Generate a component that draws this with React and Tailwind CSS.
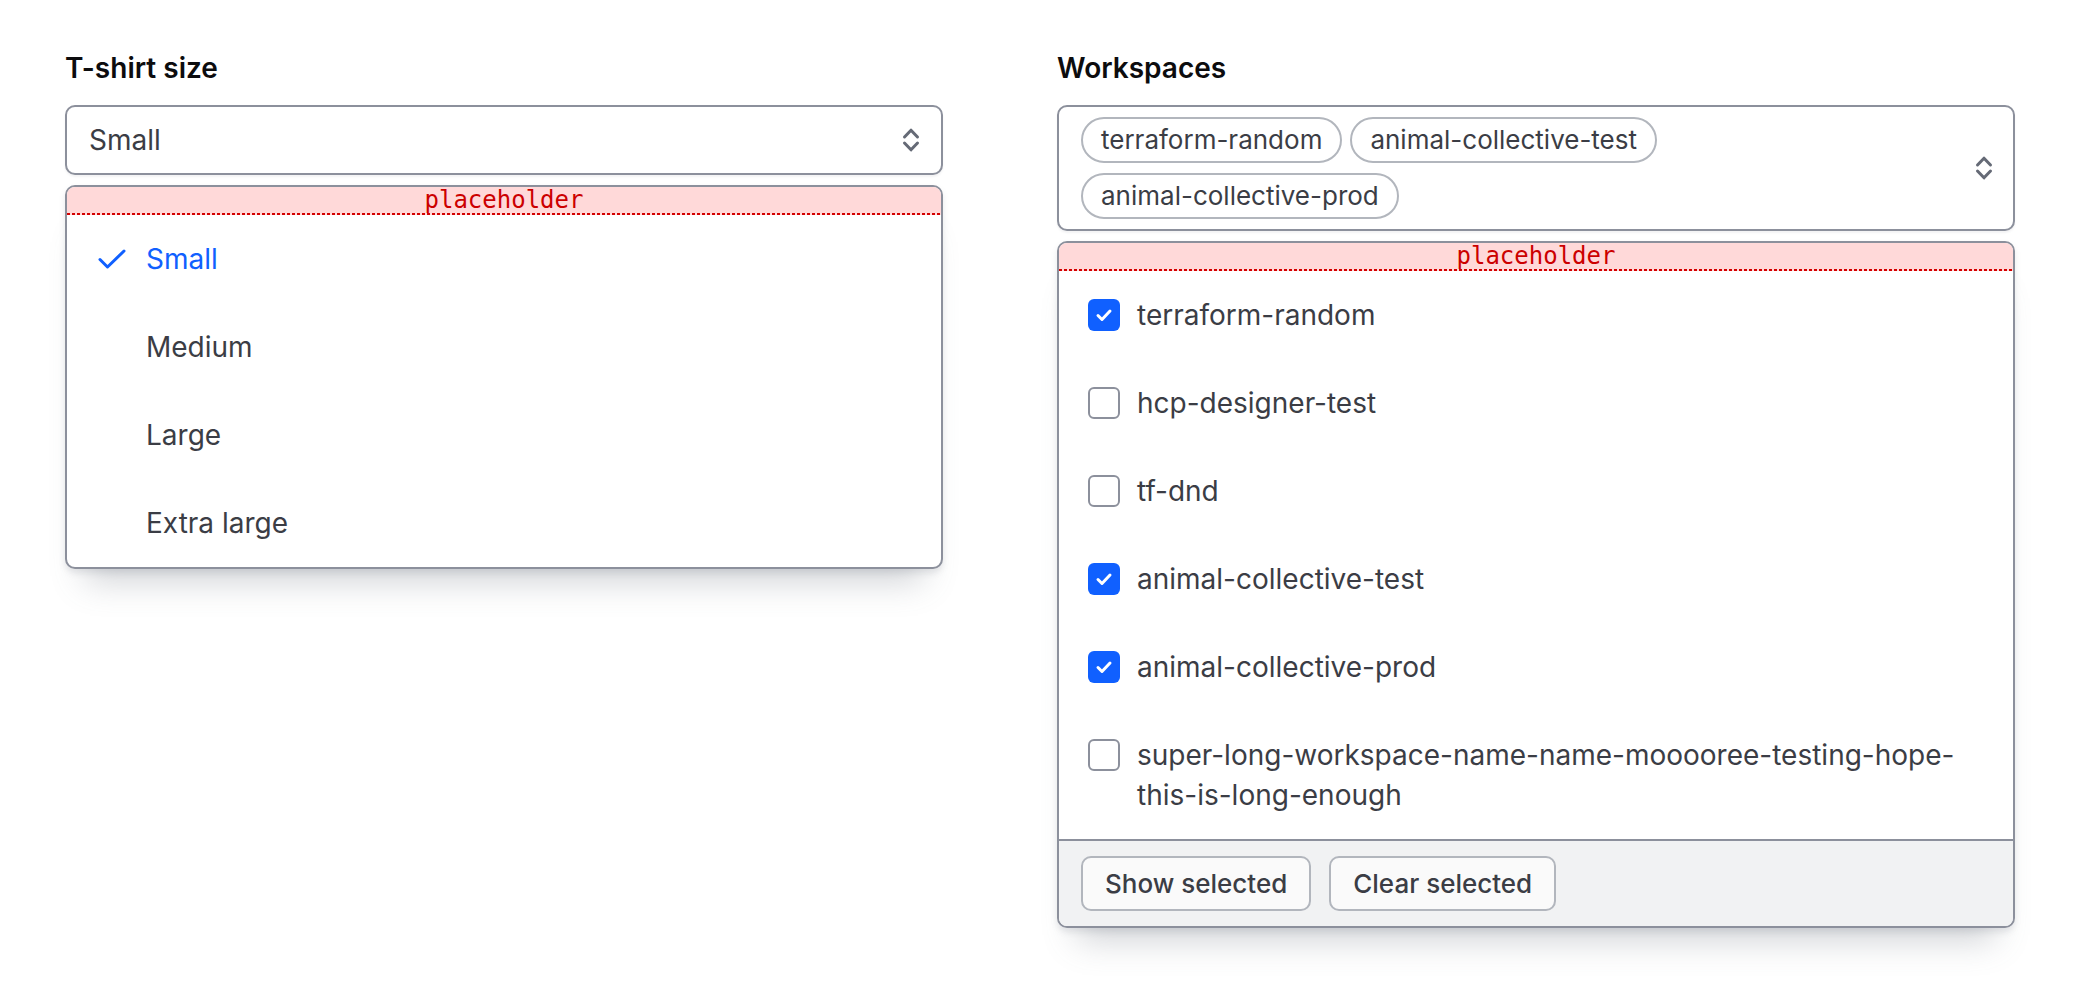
import { useState } from 'react'

const sizes = ['Small', 'Medium', 'Large', 'Extra large']

const workspaces = [
  { name: 'terraform-random', checked: true },
  { name: 'hcp-designer-test', checked: false },
  { name: 'tf-dnd', checked: false },
  { name: 'animal-collective-test', checked: true },
  { name: 'animal-collective-prod', checked: true },
  { name: 'super-long-workspace-name-name-mooooree-testing-hope-', rest: 'this-is-long-enough', checked: false },
]

const Caret = () => (
  <svg width="32" height="32" viewBox="0 0 16 16" fill="none" stroke="#656a76" strokeWidth="1.5" strokeLinecap="round" strokeLinejoin="round">
    <path d="M4.75 6.5 8 3.1l3.25 3.4" />
    <path d="M4.75 9.5 8 12.9l3.25-3.4" />
  </svg>
)

const Placeholder = () => (
  <div className="relative flex h-[28px] shrink-0 justify-center bg-[#ffd9d9]">
    <span className="font-['DejaVu_Sans_Mono',monospace] text-[24px] leading-[26px] text-[#cc0000]">placeholder</span>
    <div className="absolute bottom-0 left-0 right-0 h-[2px] bg-[image:repeating-linear-gradient(90deg,#d40000_0px,#d40000_3px,transparent_3px,transparent_5px)]" />
  </div>
)

const Checkbox = ({ checked }) =>
  checked ? (
    <div className="flex h-[32px] w-[32px] items-center justify-center rounded-[6px] bg-[#1060ff]">
      <svg width="32" height="32" viewBox="0 0 32 32" fill="none" stroke="#ffffff" strokeWidth="3" strokeLinecap="round" strokeLinejoin="round">
        <path d="M10 16.5l4 4 8-8.5" />
      </svg>
    </div>
  ) : (
    <div className="h-[32px] w-[32px] rounded-[6px] border-2 border-[#8c909c] bg-white" />
  )

export default function App() {
  const [size] = useState('Small')

  return (
    <div className="flex min-h-screen gap-[114px] bg-white pl-[65px] pt-[48px] font-['Inter',sans-serif] text-[#3b3d45]">
      {/* single select */}
      <div className="w-[878px]">
        <div className="mb-[17px] text-[28px] font-semibold leading-[40px] text-[#0c0c0e]">T-shirt size</div>
        <div className="flex h-[70px] items-center justify-between rounded-[10px] border-2 border-[#8c909c] bg-white pl-[22px] pr-[14px] shadow-[0_2px_2px_rgba(101,106,118,0.08)]">
          <span className="text-[28px] leading-[40px]">{size}</span>
          <Caret />
        </div>
        <div className="mt-[10px] flex flex-col overflow-hidden rounded-[10px] border-2 border-[#8c909c] bg-white shadow-[0_4px_6px_0_rgba(101,106,118,0.15),0_32px_32px_-20px_rgba(101,106,118,0.3)]">
          <Placeholder />
          {sizes.map((s) => (
            <div key={s} className="flex items-start gap-[18px] py-[24px] pl-[29px] pr-[24px] first:pt-[25px]">
              <div className="flex h-[40px] w-[32px] items-center justify-center">
                {s === size && (
                  <svg width="28" height="20" viewBox="0 0 28 20" fill="none" stroke="#1060ff" strokeWidth="3" strokeLinecap="round" strokeLinejoin="round">
                    <path d="M2 10.5l7.5 7.5L26 2" />
                  </svg>
                )}
              </div>
              <span className={`text-[28px] leading-[40px] ${s === size ? 'text-[#1060ff]' : 'text-[#3b3d45]'}`}>{s}</span>
            </div>
          ))}
        </div>
      </div>

      {/* multiple select */}
      <div className="w-[958px]">
        <div className="mb-[17px] text-[28px] font-semibold leading-[40px] text-[#0c0c0e]">Workspaces</div>
        <div className="flex items-center rounded-[10px] border-2 border-[#8c909c] bg-white py-[10px] pl-[22px] pr-[13px] shadow-[0_2px_2px_rgba(101,106,118,0.08)]">
          <div className="flex flex-1 flex-wrap gap-x-[8px] gap-y-[10px] pr-[8px]">
            {workspaces.filter((w) => w.checked).map((w) => (
              <span key={w.name} className="flex h-[46px] items-center rounded-full border-2 border-[#b2b6bd] px-[18px] text-[26px] leading-[30px] text-[#3b3d45]">
                {w.name}
              </span>
            ))}
          </div>
          <Caret />
        </div>
        <div className="mt-[10px] flex flex-col overflow-hidden rounded-[10px] border-2 border-[#8c909c] bg-white shadow-[0_4px_6px_0_rgba(101,106,118,0.15),0_32px_32px_-20px_rgba(101,106,118,0.3)]">
          <Placeholder />
          {workspaces.map((w) => (
            <div key={w.name} className="flex items-start gap-[17px] py-[24px] pl-[29px] pr-[24px]">
              <div className="flex h-[40px] shrink-0 items-center">
                <Checkbox checked={w.checked} />
              </div>
              <span className="text-[28px] leading-[40px] text-[#3b3d45]">
                {w.name}
                {w.rest && (
                  <>
                    <br />
                    {w.rest}
                  </>
                )}
              </span>
            </div>
          ))}
          <div className="flex gap-[18px] border-t-2 border-[#8c909c] bg-[#f1f2f3] px-[22px] pb-[15px] pt-[15px]">
            <button className="h-[55px] rounded-[10px] border-2 border-[#b2b6bd] bg-[#fafafa] px-[22px] text-[26px] font-medium leading-[30px] text-[#3b3d45]">
              Show selected
            </button>
            <button className="h-[55px] rounded-[10px] border-2 border-[#b2b6bd] bg-[#fafafa] px-[22px] text-[26px] font-medium leading-[30px] text-[#3b3d45]">
              Clear selected
            </button>
          </div>
        </div>
      </div>
    </div>
  )
}
